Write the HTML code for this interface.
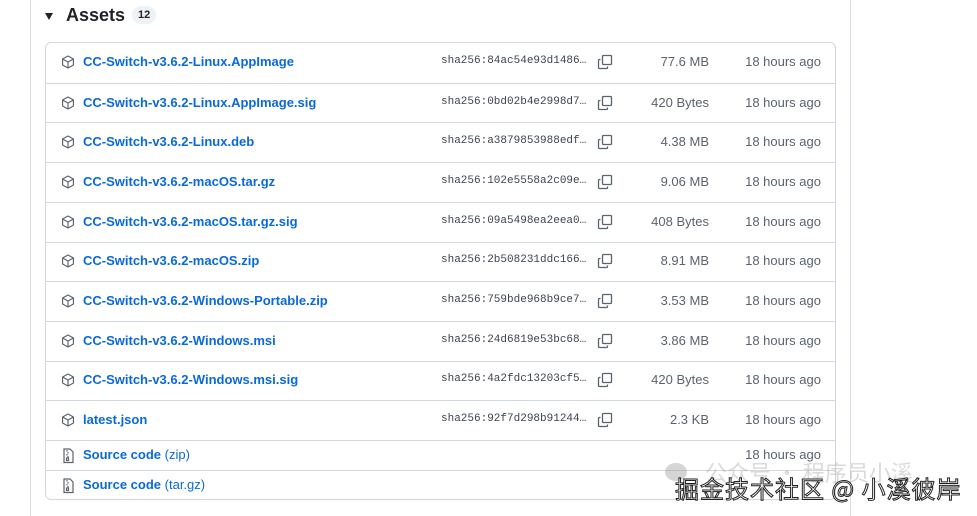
<!DOCTYPE html>
<html><head><meta charset="utf-8"><style>
*{margin:0;padding:0;box-sizing:border-box}
body{width:977px;height:516px;background:#fff;position:relative;overflow:hidden;font-family:"Liberation Sans","Noto Sans CJK SC",sans-serif;color:#1f2328}
.vl{position:absolute;top:0;bottom:0;width:1px;background:#d8dee4}
.hdr{position:absolute;left:45px;top:3px;height:24px;display:flex;align-items:center}
.tri{width:0;height:0;border-left:4.5px solid transparent;border-right:4.5px solid transparent;border-top:7px solid #1f2328;margin-right:13px;margin-top:2px}
.hdr h2{font-size:18px;font-weight:bold;margin-right:7px}
.cnt{background:#eff2f5;border-radius:10px;font-size:11px;padding:3px 6px;font-weight:600}
.box{position:absolute;left:45px;top:42px;width:791px;height:458px;border:1px solid #d1d9e0;border-radius:6px;overflow:hidden}
.row{position:absolute;left:0;right:0;border-top:1px solid #d1d9e0;font-size:13px}
.row:first-child{border-top:none}
.ic{position:absolute;left:15px}
.nm{position:absolute;left:37px;color:#0969da;font-weight:bold}
.nm span{font-weight:normal}
.sha{position:absolute;left:395px;font-family:"Liberation Mono",monospace;font-size:11px;color:#3d444d}
.cp{position:absolute;left:551px}
.sz{position:absolute;right:126px;color:#59636e}
.dt{position:absolute;right:14px;color:#59636e}
.wm{position:absolute;left:675px;top:470px;font-size:24px;color:#fff;font-family:"Noto Sans CJK SC",sans-serif;-webkit-text-stroke:1px #222;letter-spacing:1px;white-space:nowrap}
.wm2{position:absolute;left:705px;top:456px;font-size:22px;color:rgba(150,150,150,.35);font-family:"Noto Sans CJK SC",sans-serif;white-space:nowrap}
</style></head><body>
<div class="vl" style="left:30px"></div>
<div class="vl" style="left:850px"></div>
<div class="hdr"><div class="tri"></div><h2>Assets</h2><span class="cnt">12</span></div>
<div class="box" id="b"></div>
<div class="wm2">公众号 · 程序员小溪</div>
<svg style="position:absolute;left:664px;top:462px" width="26" height="22"><ellipse cx="12" cy="10" rx="11" ry="9" fill="rgba(150,150,150,.4)"/></svg>
<div class="wm">掘金技术社区 @ 小溪彼岸</div>
<script>
const pkg='<svg width="14" height="14" viewBox="0 0 16 16" fill="none" stroke="#59636e" stroke-width="1.3" stroke-linejoin="round"><path d="M8 1.2 14.2 4.6v6.8L8 14.8 1.8 11.4V4.6Z"/><path d="M1.8 4.6 8 8l6.2-3.4M8 8v6.8"/></svg>';
const zip='<svg width="14" height="16" viewBox="0 0 14 16" fill="none" stroke="#59636e" stroke-width="1.2"><path d="M3 1h6l3 3v10.5H3z"/><path d="M6 2v1.5M7 4v1.5M6 6v1.5M7 8v1.5"/><rect x="5.5" y="10" width="2" height="2.5"/></svg>';
const cp='<svg width="16" height="16" viewBox="0 0 16 16" fill="none" stroke="#59636e" stroke-width="1.3"><rect x="5.5" y="1.5" width="9" height="9" rx="1"/><path d="M3.5 5.5H2.5a1 1 0 0 0-1 1v7a1 1 0 0 0 1 1h7a1 1 0 0 0 1-1v-1"/></svg>';
const d=[["CC-Switch-v3.6.2-Linux.AppImage","84ac54e93d1486","77.6 MB"],["CC-Switch-v3.6.2-Linux.AppImage.sig","0bd02b4e2998d7","420 Bytes"],["CC-Switch-v3.6.2-Linux.deb","a3879853988edf","4.38 MB"],["CC-Switch-v3.6.2-macOS.tar.gz","102e5558a2c09e","9.06 MB"],["CC-Switch-v3.6.2-macOS.tar.gz.sig","09a5498ea2eea0","408 Bytes"],["CC-Switch-v3.6.2-macOS.zip","2b508231ddc166","8.91 MB"],["CC-Switch-v3.6.2-Windows-Portable.zip","759bde968b9ce7","3.53 MB"],["CC-Switch-v3.6.2-Windows.msi","24d6819e53bc68","3.86 MB"],["CC-Switch-v3.6.2-Windows.msi.sig","4a2fdc13203cf5","420 Bytes"],["latest.json","92f7d298b91244","2.3 KB"]];
let h='';const rh=39.7;
d.forEach((r,i)=>{const t=i*rh;const c=rh/2;
h+=`<div class="row" style="top:${t}px;height:${rh}px"><div class="ic" style="top:${c-8}px">${pkg}</div><div class="nm" style="top:${c-9}px">${r[0]}</div><div class="sha" style="top:${c-8}px">sha256:${r[1]}…</div><div class="cp" style="top:${c-9}px">${cp}</div><div class="sz" style="top:${c-9}px">${r[2]}</div><div class="dt" style="top:${c-9}px">18 hours ago</div></div>`;});
[["Source code"," (zip)"],["Source code"," (tar.gz)"]].forEach((r,i)=>{const t=397+i*30;
h+=`<div class="row" style="top:${t}px;height:30px"><div class="ic" style="top:7px">${zip}</div><div class="nm" style="top:6px">${r[0]}<span>${r[1]}</span></div>${i==0?'<div class="dt" style="top:6px">18 hours ago</div>':''}</div>`;});
document.getElementById('b').innerHTML=h;
</script>
</body></html>
